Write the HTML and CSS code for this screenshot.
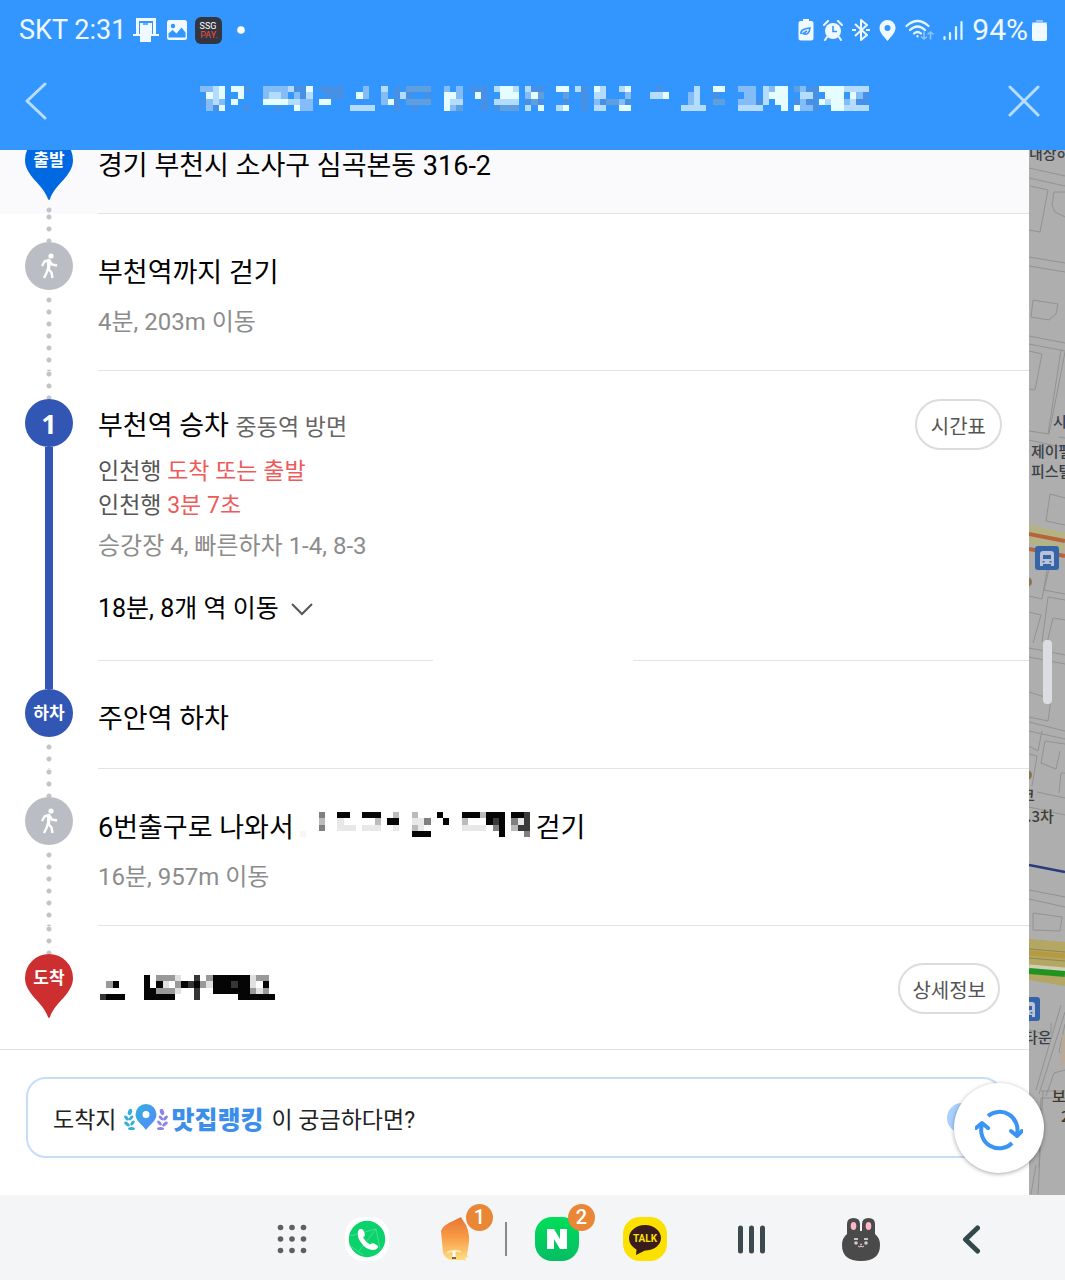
FILE: index.html
```html
<!DOCTYPE html>
<html lang="ko">
<head>
<meta charset="utf-8">
<meta name="viewport" content="width=device-width, initial-scale=1">
<title>길찾기</title>
<link rel="stylesheet" href="styles.css">
</head>
<body>
<header class="top">
  <div class="status">
    <div class="status-group">
      <span class="carrier">SKT 2:31</span>
      <svg width="26" height="26" viewBox="0 0 26 26" fill="#f0f9ff"><path d="M3 1h20v16h3v2H0v-2h3zM6 4v13h1V6h12v11h1V4z" fill-rule="evenodd"/><path d="M7 6h11v19H7z"/><path d="M10 7h5" stroke="#3396ff" stroke-width="1.5"/></svg>
      <svg width="22" height="22" viewBox="0 0 22 22"><rect x="1" y="1" width="20" height="20" rx="2.5" fill="#f0f9ff"/><circle cx="7" cy="7" r="2.2" fill="#3396ff"/><path d="M2.500 14.500l4-3.500 4 3.500 5-6 4 5v5h-17z" fill="#3396ff"/></svg>
      <svg width="27" height="27" viewBox="0 0 27 27"><rect width="27" height="27" rx="6" fill="#333640"/><text x="13" y="12" class="ssg" fill="#fff">SSG</text><text x="14" y="21" class="ssg" fill="#f0503c">PAY.</text></svg>
      <svg class="more" width="8" height="8" viewBox="0 0 8 8"><circle cx="4" cy="4" r="3.800" fill="#fff"/></svg>
    </div>
    <div class="status-group right">
      <svg width="16" height="22" viewBox="0 0 16 22"><path d="M5 0h6v2h2q2.500 0 2.500 2v15q0 2.500-2.500 2.500H3Q.5 21.500.5 19V4Q.5 2 3 2h2z" fill="#f0f9ff"/><path d="M3 15q-1-5 9-6-1 8-7 5.500l4-2.500" fill="none" stroke="#3396ff" stroke-width="1.600"/></svg>
      <svg width="20" height="21" viewBox="0 0 20 21"><circle cx="10" cy="11" r="8" fill="#f0f9ff"/><path d="M1 5l4-4M19 5l-4-4M4 17l-2 3M16 17l2 3" stroke="#f0f9ff" stroke-width="2" stroke-linecap="round"/><path d="M10 6v5.500h4" fill="none" stroke="#3396ff" stroke-width="1.600"/></svg>
      <svg width="18" height="22" viewBox="0 0 18 22" fill="none" stroke="#f0f9ff" stroke-width="2"><path d="M3 5l12 11-6 5V1l6 5L3 17" stroke-linejoin="round"/><path d="M0 11h4M14 11h4"/></svg>
      <svg width="17" height="21" viewBox="0 0 17 21"><path d="M8.500 0a8 8 0 0 1 8 8c0 5-5 9-8 13C5.500 17 .5 13 .5 8a8 8 0 0 1 8-8z" fill="#f0f9ff"/><circle cx="8.500" cy="8" r="3" fill="#3396ff"/></svg>
      <svg width="29" height="22" viewBox="0 0 29 22" fill="none" stroke="#e6f7ff" stroke-width="2.200" stroke-linecap="round"><path d="M1.500 7q11-10 22 0M5 11q7.500-7 15 0M9 14.500q3.500-3 7 0"/><path d="M12.500 17v.5"/><path d="M19 13v7m-2.500-2l2.500 2 2.500-2M25.500 20v-7M23 15l2.500-2 2.500 2" stroke="#8fc5ff" stroke-width="1.600"/></svg>
      <svg width="20" height="21" viewBox="0 0 20 21" stroke="#dff8ff" stroke-width="2.200" stroke-linecap="round"><path d="M1.500 17v2M7 13v6M13 7v12M18.500 2v17"/></svg>
      <span class="percent">94%</span>
      <svg width="15" height="21" viewBox="0 0 15 21"><path d="M4 0h7v2h4v2H0V2h4z" fill="#8fc5ff"/><rect y="3" width="15" height="18" rx="2" fill="#f0f9ff"/></svg>
    </div>
  </div>
  <div class="titlebar">
    <button class="icon-btn back" aria-label="뒤로"><svg width="22" height="38" viewBox="0 0 22 38"><path d="M20 2L2 19l18 17" fill="none" stroke="#b9ddff" stroke-width="3" stroke-linecap="round" stroke-linejoin="round"/></svg></button>
    <svg class="mosaic route" viewBox="0 0 107 4" preserveAspectRatio="none" aria-hidden="true">
      <path stroke="#4691e6" d="M7 .5h1M15 .5h2M19 .5h4M31 .5h1M43 .5h3M53 .5h2M61 .5h1M73 .5h1M97 .5h2M16 1.500h1M20 1.500h3M31 1.500h1M33 1.500h1M36 1.500h1M45 1.500h1M61 1.500h1M82 1.500h1M98 1.500h1M106 1.500h1M0 2.500h1M31 2.500h1M45 2.500h1M52 2.500h1M54 2.500h1M58 2.500h1M61 2.500h1M64 2.500h1M68 2.500h1M89 2.500h1M95 2.500h1M97 2.500h2M105 2.500h2M2 3.500h1M7 3.500h1M12 3.500h1M31 3.500h1M34 3.500h1M45 3.500h1M47 3.500h1M61 3.500h1M98 3.500h1"/>
      <path stroke="#5f9fdf" d="M33 .5h4M95 .5h1M54 1.500h1M58 1.500h1M33 2.500h4M53 2.500h1M65 2.500h2M82 2.500h2M41 3.500h1M48 3.500h3"/>
      <path stroke="#84bcf8" d="M0 .5h2M10 .5h4M26 .5h1M39 .5h1M41 .5h1M86 .5h3M91 .5h1M96 .5h1M10 1.500h1M13 1.500h1M15 1.500h1M26 1.500h1M29 1.500h1M41 1.500h1M52 1.500h1M68 1.500h1M78 1.500h1M87 1.500h2M105 1.500h1M1 2.500h1M3 2.500h1M16 2.500h2M29 2.500h1M63 2.500h1M67 2.500h1M78 2.500h1M86 2.500h3M96 2.500h1M103 2.500h1M1 3.500h1M16 3.500h2M40 3.500h1M96 3.500h2"/>
      <path stroke="#b4dcff" d="M2 .5h1M14 .5h1M29 .5h1M47 .5h1M50 .5h1M52 .5h1M60 .5h1M64 .5h1M67 .5h1M79 .5h1M90 .5h1M103 .5h4M2 1.500h1M11 1.500h2M17 1.500h1M32 1.500h1M63 1.500h2M72 1.500h2M79 1.500h1M90 1.500h1M96 1.500h2M2 2.500h1M14 2.500h2M40 2.500h2M47 2.500h4M79 2.500h1M90 2.500h1M100 2.500h1M104 2.500h1M24 3.500h4M52 3.500h1M57 3.500h1M63 3.500h2M77 3.500h4M86 3.500h4M103 3.500h4"/>
      <path stroke="#e6fdff" d="M3 .5h1M5 .5h2M17 .5h1M48 .5h2M57 .5h2M63 .5h1M68 .5h1M82 .5h2M92 .5h2M99 .5h4M1 1.500h1M3 1.500h1M6 1.500h1M25 1.500h1M39 1.500h2M44 1.500h1M48 1.500h3M53 1.500h1M74 1.500h1M91 1.500h3M100 1.500h3M104 1.500h1M5 2.500h1M10 2.500h4M19 2.500h2M30 2.500h1M39 2.500h1M92 2.500h2M99 2.500h1M101 2.500h2M3 3.500h1M15 3.500h1M39 3.500h1M54 3.500h1M58 3.500h1M67 3.500h2M93 3.500h1M95 3.500h1M101 3.500h2"/>
    </svg>
    <button class="icon-btn" aria-label="닫기"><svg width="32" height="32" viewBox="0 0 32 32"><path d="M2 2l28 28M30 2L2 30" stroke="#b9ddff" stroke-width="3" stroke-linecap="round"/></svg></button>
  </div>
</header>

<main class="main">
  <section class="panel">
    <ol class="steps">
      <li class="step start">
        <div class="rail">
          <svg class="pin" width="48" height="50" viewBox="0 0 48 50"><path d="M24-14A24 24 0 0 1 48 10C48 26 30 34 25 49q-1 2-2 0C18 34 0 26 0 10A24 24 0 0 1 24-14z" fill="#0068e0"/><text x="24" y="16" class="pin-text">출발</text></svg>
          <span class="dots after"></span>
        </div>
        <div class="body"><h2 class="title">경기 부천시 소사구 심곡본동 316-2</h2></div>
      </li>
      <li class="step">
        <div class="rail">
          <span class="dots before"></span>
          <span class="marker walk"><svg width="18" height="26" viewBox="0 0 18 26"><circle cx="11" cy="3" r="2.600" fill="#fff"/><path d="M2 13l2.500-4.500L9 7l3 4.500 5 1M9.500 8L8 15.500l3.500 4 1 5.500M8 15.500L6.500 20 4 25" fill="none" stroke="#fff" stroke-width="2.400" stroke-linejoin="round"/><path d="M7 7h4l-1 10H7z" fill="#fff"/></svg></span>
          <span class="dots after"></span>
        </div>
        <div class="body"><h2 class="title">부천역까지 걷기</h2><p class="sub">4분, 203m 이동</p></div>
      </li>
      <li class="step ride">
        <div class="rail">
          <span class="dots before"></span>
          <span class="marker line-no">1</span>
          <span class="track"></span>
        </div>
        <div class="body">
          <h2 class="title">부천역 승차 <small>중동역 방면</small></h2>
          <p class="arrival first">인천행 <em>도착 또는 출발</em></p>
          <p class="arrival">인천행 <em>3분 7초</em></p>
          <p class="platform">승강장 4, 빠른하차 1-4, 8-3</p>
          <button class="expand">18분, 8개 역 이동 <svg width="22" height="13" viewBox="0 0 22 13"><path d="M1 1l10 10L21 1" fill="none" stroke="#555" stroke-width="2"/></svg></button>
        </div>
        <button class="pill">시간표</button>
      </li>
      <li class="step off">
        <div class="rail">
          <span class="track before"></span>
          <span class="marker line-off">하차</span>
          <span class="dots after"></span>
        </div>
        <div class="body"><h2 class="title">주안역 하차</h2></div>
      </li>
      <li class="step">
        <div class="rail">
          <span class="dots before"></span>
          <span class="marker walk"><svg width="18" height="26" viewBox="0 0 18 26"><circle cx="11" cy="3" r="2.600" fill="#fff"/><path d="M2 13l2.500-4.500L9 7l3 4.500 5 1M9.500 8L8 15.500l3.500 4 1 5.500M8 15.500L6.500 20 4 25" fill="none" stroke="#fff" stroke-width="2.400" stroke-linejoin="round"/><path d="M7 7h4l-1 10H7z" fill="#fff"/></svg></span>
          <span class="dots after"></span>
        </div>
        <div class="body">
          <h2 class="title with-mosaic"><span>6번출구로 나와서</span>
            <svg class="mosaic place" viewBox="0 0 37 4" preserveAspectRatio="none" aria-hidden="true">
              <path stroke="#e8e8e8" d="M6 1.500h1M18 1.500h2M35 1.500h1M6 2.500h3M10 2.500h3M15 2.500h1M19 2.500h1M26 2.500h4"/>
              <path stroke="#f6f6f6" d="M0 3.500h1"/>
              <path stroke="#bbb" d="M15 .5h1M18 .5h1M29 .5h1M3 1.500h1M12 1.500h1M26 1.500h1M18 2.500h1M34 2.500h1"/>
              <path stroke="#808080" d="M3 .5h1M20 1.500h1M34 1.500h1M3 2.500h1M31 2.500h1M36 3.500h1"/>
              <path stroke="#3a3a3a" d="M36 .5h1M36 1.500h1M31 1.500h1M35 2.500h2"/>
              <path stroke="#050505" d="M6 .5h2M10 .5h3M22 .5h1M26 .5h3M30 .5h3M34 .5h2M14 1.500h2M23 1.500h1M30 1.500h1M32 1.500h1M32 2.500h1M18 3.500h3M32 3.500h1"/>
            </svg>
            <span>걷기</span></h2>
          <p class="sub">16분, 957m 이동</p>
        </div>
      </li>
      <li class="step end">
        <div class="rail">
          <span class="dots before"></span>
          <svg class="pin" width="48" height="65" viewBox="0 0 48 65"><path d="M24 0A24 24 0 0 1 48 24C48 40 30 48 25 63q-1 2-2 0C18 48 0 40 0 24A24 24 0 0 1 24 0z" fill="#cd2f30"/><text x="24" y="30" class="pin-text">도착</text></svg>
        </div>
        <div class="body">
          <svg class="mosaic goal" viewBox="0 0 28 4" preserveAspectRatio="none" aria-hidden="true">
            <path stroke="#e0e0e0" d="M10 1.500h1M24 1.500h1M17 1.500h1M12 .5h1M24 .5h1M12 2.500h1M25 2.500h1"/>
            <path stroke="#999" d="M9 .5h3M17 .5h1M25 .5h2M1 1.500h1M12 1.500h1M16 1.500h1M9 2.500h3M24 2.500h1M26 2.500h1"/>
            <path stroke="#363636" d="M15 .5h1M14 1.500h1M21 1.500h1M15 2.500h1M0 3.500h1M15 3.500h1"/>
            <path stroke="#050505" d="M7 .5h1M18 .5h6M2 1.500h1M7 1.500h1M9 1.500h1M13 1.500h1M15 1.500h1M18 1.500h3M22 1.500h2M26 1.500h1M7 2.500h2M18 2.500h6M1 3.500h3M7 3.500h5M22 3.500h6"/>
          </svg>
        </div>
        <button class="pill">상세정보</button>
      </li>
    </ol>
    <a class="banner" href="#ranking">
      <span>도착지</span>
      <svg width="44" height="28" viewBox="0 0 44 28"><defs><linearGradient id="g" x1="0" y1="0" x2="1" y2="1"><stop offset="0" stop-color="#35b0dc"/><stop offset="1" stop-color="#5587ff"/></linearGradient></defs><path fill-rule="evenodd" d="M22 0a10.500 10.500 0 0 1 10.500 10.500C32.500 17 26 20 22 26 18 20 11.500 17 11.500 10.500A10.500 10.500 0 0 1 22 0zm0 7a3.500 3.500 0 1 0 0 7 3.500 3.500 0 0 0 0-7z" fill="url(#g)"/><g fill="#35aed8"><ellipse cx="6" cy="8" rx="2" ry="3.200" transform="rotate(20 6 8)"/><ellipse cx="2.500" cy="14" rx="1.600" ry="3" transform="rotate(-40 2.500 14)"/><ellipse cx="7" cy="14" rx="1.500" ry="3" transform="rotate(45 7 14)"/><ellipse cx="3" cy="20" rx="1.600" ry="3.300" transform="rotate(-50 3 20)"/><ellipse cx="8.500" cy="19" rx="1.500" ry="3" transform="rotate(40 8.500 19)"/><ellipse cx="7.500" cy="24.500" rx="3.500" ry="1.600"/></g><g fill="#8a84ee"><ellipse cx="38" cy="8" rx="2" ry="3.200" transform="rotate(-20 38 8)"/><ellipse cx="41.500" cy="14" rx="1.600" ry="3" transform="rotate(40 41.500 14)"/><ellipse cx="37" cy="14" rx="1.500" ry="3" transform="rotate(-45 37 14)"/><ellipse cx="41" cy="20" rx="1.600" ry="3.300" transform="rotate(50 41 20)"/><ellipse cx="35.500" cy="19" rx="1.500" ry="3" transform="rotate(-40 35.500 19)"/><ellipse cx="36.500" cy="24.500" rx="3.500" ry="1.600"/></g></svg>
      <strong>맛집랭킹</strong>
      <span>이 궁금하다면?</span>
      <span class="banner-dot"></span>
    </a>
  </section>

  <aside class="map" aria-label="지도">
    <svg viewBox="1029 150 36 1044" preserveAspectRatio="xMinYMin slice">
      <path fill="#aeaeae" d="M1029 150h36v1044h-36z"/>
      <g fill="none" stroke="#929292" stroke-width="1">
        <path d="M1029 168l36 8M1029 178l36 8M1029 257l36 6M1029 266l36 6M1029 336l36 7M1029 344l36 7M1065 352l-16 82-20-3M1061 350l-13 84M1029 440l36 8M1059 437l6 1"/>
        <path d="M1030 186l18 4-8 42-11-2M1065 192l-11 0-2 13 3 7 10 5M1033 300l25 4-2 10-7 6-18-3zM1029 351l13 3-7 36-6-1M1065 498l-15-4-4 27 19 4M1050 565l-6 25 21 4M1048 565l-6 34-13-3M1065 600l-17-3-6 45M1065 620l-12-2-7 29M1029 612l12 3-8 28"/>
        <path d="M1029 648l36 7M1029 657l36 7M1029 692l22 7-3 22-19-4M1029 722l36 9M1029 731l36 8M1029 746l9 5 4-20M1065 744l-20-3-4 22 15 6 4-18M1029 754l8 2-5 30M1065 773l-4 0-2 20M1037 792l28 6M1029 807l36 8M1029 890l36 7M1029 899l36 8M1033 913l29 4-2 14-27-1z"/>
        <path d="M1065 1012l-26 82M1061 1005l-25 85M1029 1030l12 3 10 0 0-10M1065 1055l-6-3 6-28M1065 1091l-24 0M1065 1098l-24 0-2 70M1046 1096l8-23 11-3M1043 1091l-5 103M1036 1165l-5 29"/>
      </g>
      <path d="M1029 528l36 8M1029 540l36 8" stroke="#b5b385" stroke-width="7"/>
      <path d="M1029 534l36 7M1029 549l36 7" stroke="#b76534" stroke-width="4"/>
      <path d="M1029 865l36 7" stroke="#273a7c" stroke-width="2.500"/>
      <path d="M1029 939l36 3v44l-36-6z" fill="#b4a663"/><path d="M1029 949l36 3M1029 958l36 3" stroke="#8f874f" stroke-width="1"/><path d="M1029 953l36 3" stroke="#b59a40" stroke-width="5"/>
      <path d="M1029 969l36 3" stroke="#cfcfb8" stroke-width="9"/><path d="M1029 971l36 3" stroke="#239320" stroke-width="6"/>
      <circle cx="1027" cy="582" r="5" fill="#8c744a"/><circle cx="1027" cy="775" r="5" fill="#8c744a"/>
      <path d="M1060 1065l2-30h3v28z" fill="#b9aa98"/>
      <g id="bus"><rect x="1035" y="546" width="24" height="24" rx="3" fill="#3564a9"/><path fill-rule="evenodd" fill="#b9c3d4" d="M1043 551h8q3 0 3 3v12h-3v-2h-8v2h-3v-12q0-3 3-3zm0 4v4h8v-4zm-.5 6v1.500h2V561zm7 0v1.500h2V561z"/></g>
      <use href="#bus" x="-19" y="451"/>
      <g class="map-text"><text x="1029" y="159">내상하</text><text x="1053" y="427">시</text><text x="1031" y="457">제이펠</text><text x="1031" y="477">피스텔</text><g fill="#413d35"><text x="1021" y="801">코</text><text x="1027" y="822">.3차</text></g><text x="1024" y="1043">타운</text><g fill="#413628"><text x="1052" y="1102">보</text><text x="1061" y="1122">2</text></g></g>
      <rect x="1043" y="640" width="9" height="64" rx="4" fill="#dcdde0"/>
    </svg>
  </aside>
  <button class="refresh" aria-label="새로고침"><svg width="48" height="42" viewBox="0 0 48 42" fill="none" stroke="#3b93f5" stroke-width="4"><path d="M13 7A18 18 0 0 1 42 25M37 34A18 18 0 0 1 7 16"/><path d="M36 22l6 5 5-5M1 19l6-5 6 5" stroke-linejoin="round" stroke-linecap="round"/></svg></button>
</main>

<nav class="dock" aria-label="작업 표시줄">
  <button class="slot" aria-label="앱"><svg width="32" height="32" viewBox="0 0 32 32" fill="#606062"><circle cx="4.500" cy="4.500" r="2.800"/><circle cx="16" cy="4.500" r="2.800"/><circle cx="27.500" cy="4.500" r="2.800"/><circle cx="4.500" cy="16" r="2.800"/><circle cx="16" cy="16" r="2.800"/><circle cx="27.500" cy="16" r="2.800"/><circle cx="4.500" cy="27.500" r="2.800"/><circle cx="16" cy="27.500" r="2.800"/><circle cx="27.500" cy="27.500" r="2.800"/></svg></button>
  <div class="apps">
    <button class="slot" aria-label="전화"><svg width="44" height="44" viewBox="0 0 44 44"><rect width="44" height="44" rx="18" fill="#fff"/><circle cx="22" cy="22" r="18.200" fill="#0cd26c"/><path d="M5 19l26-7 4 20M31 12L14 34M4 28l14 10" stroke="#5fe3a0" stroke-width=".7" fill="none"/><path d="M13 14q3-4 5.500-.5l1.500 4q0 2-2 3 3 5 7 7 2-2 4-1l3.500 2q2 2-2 4-7 2-13-5T13 14z" fill="#fff"/></svg></button>
    <button class="slot" aria-label="풍등"><svg width="44" height="44" viewBox="0 0 44 44"><defs><linearGradient id="fire" x1="0" y1="0" x2="0" y2="1"><stop offset="0" stop-color="#e87536"/><stop offset=".45" stop-color="#f79a45"/><stop offset="1" stop-color="#ffdf86"/></linearGradient></defs><path d="M8 14q2-6 12-10l8-4q2 4 5 8 4 10 3 17l-2 13 1 3-3-1 1 4-3-1H19q-7-1-9-7z" fill="url(#fire)"/><path d="M14 36q6-4 14-1" stroke="#ffe9a0" stroke-width="2" fill="none"/><path d="M21 34v6" stroke="#fff" stroke-width="3"/><path d="M19 41h4" stroke="#8a6335" stroke-width="2"/></svg><span class="badge">1</span></button>
  </div>
  <span class="divider"></span>
  <div class="apps">
    <button class="slot" aria-label="네이버"><svg width="44" height="44" viewBox="0 0 44 44"><defs><linearGradient id="nv" x1="0" y1="0" x2="0" y2="1"><stop offset="0" stop-color="#00de5a"/><stop offset="1" stop-color="#05bd63"/></linearGradient></defs><rect width="44" height="44" rx="17" fill="url(#nv)"/><path d="M12 12h7l6 10V12h7v20h-7l-6-10v10h-7z" fill="#fff"/></svg><span class="badge">2</span></button>
    <button class="slot" aria-label="카카오톡"><svg width="44" height="44" viewBox="0 0 44 44"><rect width="44" height="44" rx="17" fill="#fbe100"/><path d="M22 8c9 0 16 6 16 13s-7 12.500-16 12.500L13 38l.5-5.500C9 30 6 26 6 21 6 14 13 8 22 8z" fill="#3b1c1c"/><text x="22" y="25" class="talk">TALK</text></svg></button>
  </div>
  <div class="keys">
    <button class="slot" aria-label="최근 앱"><svg width="27" height="29" viewBox="0 0 27 29"><path d="M2.500 3v23M13.500 3v23M24.500 3v23" stroke="#3a4a4e" stroke-width="5" stroke-linecap="round"/></svg></button>
    <button class="slot" aria-label="홈"><svg width="38" height="44" viewBox="0 0 38 44"><path d="M5 17V7q0-6 6.500-6T18 7v7h2V7q0-6 6.500-6T33 7v10q5 4 5 11 0 16-19 16T0 28q0-7 5-11z" fill="#4a4a4a"/><ellipse cx="11.500" cy="9" rx="2.800" ry="4" fill="#fbb9c8"/><ellipse cx="26.500" cy="9" rx="2.800" ry="4" fill="#fbb9c8"/><path d="M12 22h4M22 22h4" stroke="#eee" stroke-width="1.500"/><circle cx="14" cy="26" r="1.800" fill="#ccc"/><circle cx="24" cy="26" r="1.800" fill="#ccc"/><path d="M16 29q2 2 3 0 1 2 3 0" fill="none" stroke="#ddd"/><circle cx="19" cy="27.500" r="1" fill="#f6a8a8"/></svg></button>
    <button class="slot" aria-label="뒤로"><svg width="18" height="29" viewBox="0 0 18 29"><path d="M15.500 3L3.500 14.500l12 11.500" fill="none" stroke="#34474a" stroke-width="5" stroke-linecap="round" stroke-linejoin="round"/></svg></button>
  </div>
</nav>
</body>
</html>
```
FILE: styles.css
```css
* { box-sizing: border-box; }

body {
  margin: 0;
  min-height: 100vh;
  display: flex;
  flex-direction: column;
  background: #fff;
  color: #111;
  font-family: Roboto, "Noto Sans CJK KR", sans-serif;
}

h2, p, ol { margin: 0; padding: 0; }
ol { list-style: none; }
svg { display: block; flex: none; }

button {
  border: 0;
  padding: 0;
  background: none;
  color: inherit;
  font: inherit;
  cursor: pointer;
}

/* Header */
.top { background: #3396ff; color: #f0f9ff; }

.status {
  height: 60px;
  padding: 0 18px 0 19px;
  display: flex;
  align-items: center;
  justify-content: space-between;
}
.status-group { display: flex; align-items: center; gap: 7px; }
.status-group.right { gap: 9px; }
.carrier, .percent { font-size: 27px; line-height: 36px; }
.percent { font-size: 30px; margin-right: -5px; }
.more { margin-left: 8px; }
.ssg { font: 9px Roboto, sans-serif; text-anchor: middle; }

.titlebar {
  height: 90px;
  padding: 0 25px 8px;
  display: flex;
  align-items: center;
  justify-content: space-between;
}
.icon-btn {
  width: 32px;
  height: 48px;
  display: flex;
  align-items: center;
  justify-content: center;
}
.icon-btn.back { width: 36px; justify-content: flex-start; }

.mosaic { shape-rendering: crispEdges; fill: none; }
.route { width: 669px; height: 25px; margin-bottom: 5px; }
.place { width: 230px; height: 25px; margin-bottom: 8px; }
.goal { width: 175px; height: 25px; }

/* Route panel */
.main { position: relative; flex: 1; display: flex; }
.panel { flex: 1; min-width: 0; background: #fff; }

.step {
  display: grid;
  grid-template-columns: 98px 1fr auto;
}
.step::after {
  content: "";
  grid-column: 2 / -1;
  grid-row: 2;
  height: 1px;
  background: #e3e3e5;
}
.rail {
  grid-column: 1;
  grid-row: 1 / 3;
  display: flex;
  flex-direction: column;
  align-items: center;
}
.dots {
  width: 6px;
  background: radial-gradient(circle at 3px 6px, #c3c4c8 2px, transparent 3px) 0 0 / 6px 12px;
}
.dots.before { height: 28px; background-position: 0 -3px; }
.dots.after { flex: 1; margin-top: 4px; }
.track { flex: 1; width: 8px; background: #3256b3; }
.track.before { flex: none; height: 28px; }

.marker {
  width: 48px;
  height: 48px;
  border-radius: 50%;
  display: flex;
  align-items: center;
  justify-content: center;
  color: #fff;
  font-weight: 700;
}
.walk { background: #babdc3; }
.line-no { background: #3256b3; font: 700 27px "Noto Sans", sans-serif; }
.line-off { background: #3256b3; font-size: 17px; line-height: 24px; }
.pin-text {
  fill: #fff;
  font: 700 17px "Noto Sans CJK KR", sans-serif;
  text-anchor: middle;
}

.body { grid-column: 2; grid-row: 1; padding: 41px 0 31px; }
.title { font-size: 27px; line-height: 36px; font-weight: 400; color: #000; }
.title small { font-size: 23px; line-height: 24px; color: #666; }
.sub { margin-top: 14px; font-size: 24px; line-height: 34px; color: #8c8c8c; }
.with-mosaic { display: flex; align-items: center; gap: 6px; }

.start { background: #fafafc; }
.start .body { padding: 0 0 27px; }
.start .title { margin-top: -4px; line-height: 40px; }

.ride .body { padding: 37px 0 33px; }
.ride::after {
  background: linear-gradient(90deg, #e3e3e5 36%, transparent 36% 57.5%, #e3e3e5 57.5%);
}
.arrival { font-size: 23px; line-height: 34px; color: #555; }
.arrival.first { margin-top: 11px; }
.arrival em { font-style: normal; color: #ee5a5a; }
.platform { margin-top: 6px; font-size: 24px; line-height: 34px; color: #8c8c8c; }
.expand {
  margin-top: 28px;
  display: flex;
  align-items: center;
  gap: 12px;
  font-size: 25px;
  line-height: 36px;
  color: #000;
}

.off .body { padding: 40px 0 31px; }
.end .body { padding: 49px 0; }
.end .goal { margin-left: 2px; }
.end::after { grid-column: 1 / -1; }

.pill {
  grid-column: 3;
  grid-row: 1;
  align-self: start;
  margin: 28px 27px 0 0;
  height: 51px;
  padding: 2px 14px 0;
  border: 2px solid #dcdcde;
  border-radius: 26px;
  background: #fff;
  font-size: 20px;
  color: #555;
}
.end .pill { margin-top: 37px; margin-right: 29px; padding: 2px 12px 0; }

.banner {
  margin: 27px 26px 37px;
  height: 81px;
  padding: 0 24px 0 25px;
  display: flex;
  align-items: center;
  gap: 8px;
  border: 2px solid #c5def8;
  border-radius: 20px;
  color: #222;
  font-size: 23px;
  text-decoration: none;
}
.banner strong { margin-left: -5px; font-size: 25px; font-weight: 900; color: #3b8eea; }
.banner-dot {
  width: 30px;
  height: 30px;
  margin-left: auto;
  border-radius: 50%;
  background: #a9d0ff;
}

/* Map strip behind the panel */
.map { width: 36px; flex: none; background: #aeaeae; overflow: hidden; }
.map svg { width: 100%; height: auto; }
.map-text { font: 500 15px "Noto Sans CJK KR", sans-serif; fill: #3a3f47; }

.refresh {
  position: absolute;
  right: 21px;
  bottom: 22px;
  width: 90px;
  height: 90px;
  padding-top: 3px;
  display: flex;
  align-items: center;
  justify-content: center;
  border-radius: 50%;
  background: #fff;
  box-shadow: 0 1px 4px rgba(0, 0, 0, .35);
}

/* Taskbar */
.dock {
  height: 86px;
  padding: 2px 72px 0 0;
  display: flex;
  align-items: center;
  justify-content: flex-end;
  background: #f4f5f7;
}
.slot {
  position: relative;
  width: 44px;
  height: 44px;
  display: flex;
  align-items: center;
  justify-content: center;
}
.apps { display: flex; gap: 44px; }
.dock > .slot { margin-right: 31px; }
.divider { width: 2px; height: 34px; margin: 0 28px; background: #8a8a8c; }
.keys { display: flex; gap: 66px; margin-left: 62px; }
.badge {
  position: absolute;
  top: -13px;
  right: -16px;
  width: 27px;
  height: 27px;
  border-radius: 50%;
  background: #ea8736;
  color: #fff;
  font-size: 20px;
  font-weight: 500;
  line-height: 27px;
}
.talk { fill: #fbe100; font: 700 10px Roboto, sans-serif; text-anchor: middle; }
```
